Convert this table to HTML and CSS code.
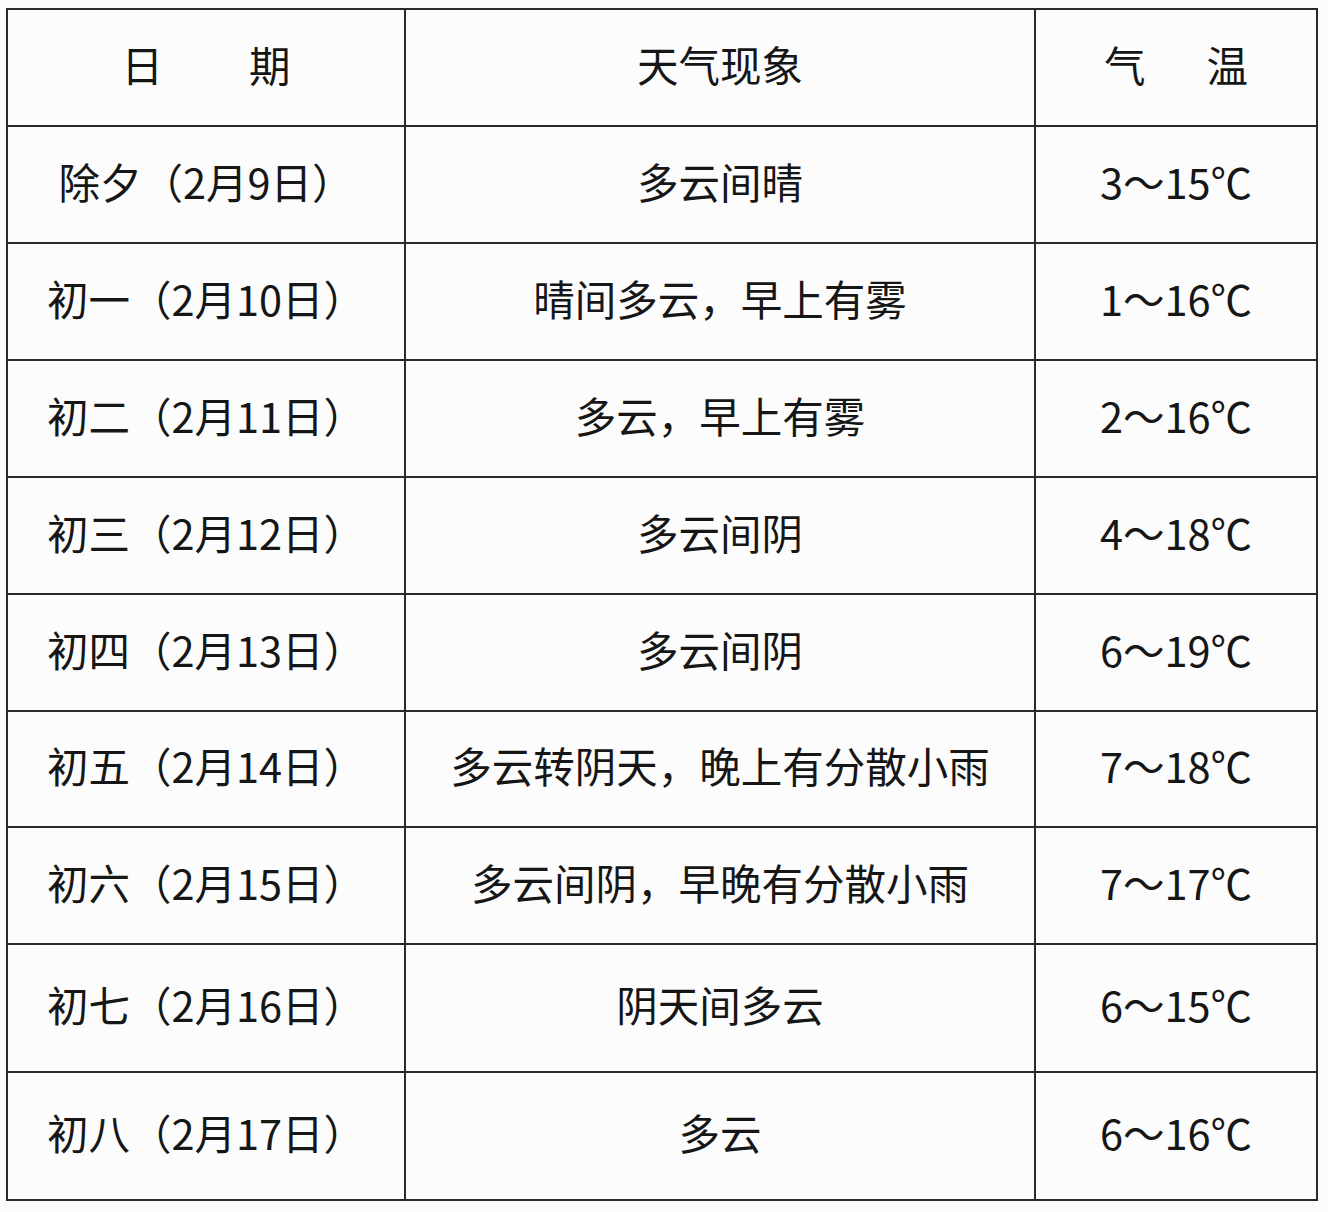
FILE: index.html
```html
<!DOCTYPE html>
<html lang="zh-CN">
<head>
<meta charset="utf-8">
<title>春节天气</title>
<link rel="stylesheet" href="styles.css">
</head>
<body>
<table class="wx">
  <colgroup>
    <col class="c-date">
    <col class="c-desc">
    <col class="c-temp">
  </colgroup>
  <thead>
    <tr class="r-std">
      <th><span class="spread sp-date"><span>日</span><span>期</span></span></th>
      <th>天气现象</th>
      <th><span class="spread sp-temp"><span>气</span><span>温</span></span></th>
    </tr>
  </thead>
  <tbody>
    <tr class="r-std"><td>除夕（2月9日）</td><td>多云间晴</td><td>3～15℃</td></tr>
    <tr class="r-std"><td>初一（2月10日）</td><td>晴间多云，早上有雾</td><td>1～16℃</td></tr>
    <tr class="r-std"><td>初二（2月11日）</td><td>多云，早上有雾</td><td>2～16℃</td></tr>
    <tr class="r-std"><td>初三（2月12日）</td><td>多云间阴</td><td>4～18℃</td></tr>
    <tr class="r-std"><td>初四（2月13日）</td><td>多云间阴</td><td>6～19℃</td></tr>
    <tr class="r-sm"><td>初五（2月14日）</td><td>多云转阴天，晚上有分散小雨</td><td>7～18℃</td></tr>
    <tr class="r-std"><td>初六（2月15日）</td><td>多云间阴，早晚有分散小雨</td><td>7～17℃</td></tr>
    <tr class="r-tall"><td>初七（2月16日）</td><td>阴天间多云</td><td>6～15℃</td></tr>
    <tr class="r-tall"><td>初八（2月17日）</td><td>多云</td><td>6～16℃</td></tr>
  </tbody>
</table>
</body>
</html>
```
FILE: styles.css
```css
html, body {
  margin: 0;
  padding: 0;
  background: #fbfbfd;
}

body {
  padding: 8px 0 0 6px;
  font-family: "Noto Sans CJK SC", "Noto Sans", sans-serif;
  color: #161616;
}

.wx {
  table-layout: fixed;
  border-collapse: separate;
  border-spacing: 2px;
  background: #2a2a2a;
  width: 1312px;
}

.c-date { width: 396px; }
.c-desc { width: 628px; }
.c-temp { width: 280px; }

.wx th,
.wx td {
  background: #fcfcfd;
  padding: 0 0 6px 0;
  text-align: center;
  vertical-align: middle;
  font-size: 41.5px;
  font-weight: 400;
  line-height: 1.2;
  white-space: nowrap;
}

.r-std { height: 115px; }
.r-sm { height: 114px; }
.r-tall { height: 126px; }

.spread {
  display: inline-flex;
  justify-content: center;
}

.sp-date { gap: 86px; }
.sp-temp { gap: 61px; }
```
